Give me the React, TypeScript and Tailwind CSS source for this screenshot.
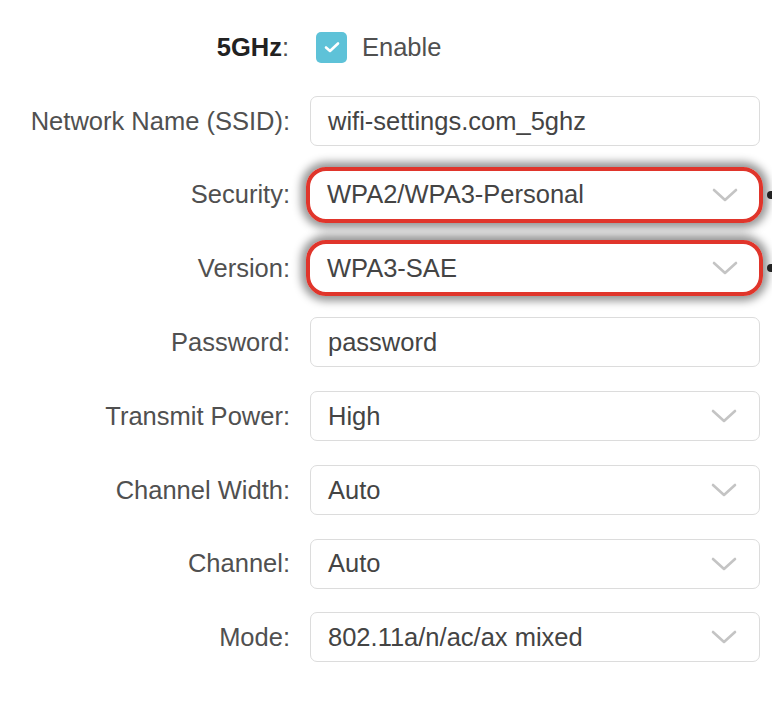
import React from "react";

const Chevron = () => (
  <svg width="28" height="16" viewBox="0 0 28 16" className="shrink-0">
    <polyline points="3,3 14,13 25,3" fill="none" stroke="#c4c4c4" strokeWidth="2.6" strokeLinecap="round" strokeLinejoin="round" />
  </svg>
);

type Row = { label: string; value: string; select?: boolean; mark?: boolean };

const rows: Row[] = [
  { label: "Network Name (SSID):", value: "wifi-settings.com_5ghz" },
  { label: "Security:", value: "WPA2/WPA3-Personal", select: true, mark: true },
  { label: "Version:", value: "WPA3-SAE", select: true, mark: true },
  { label: "Password:", value: "password" },
  { label: "Transmit Power:", value: "High", select: true },
  { label: "Channel Width:", value: "Auto", select: true },
  { label: "Channel:", value: "Auto", select: true },
  { label: "Mode:", value: "802.11a/n/ac/ax mixed", select: true },
];

export default function App() {
  return (
    <div
      className="w-[772px] h-[704px] bg-white overflow-hidden pt-[22px] flex flex-col gap-[23.8px] text-[25.5px] text-[#505050]"
      style={{ fontFamily: '"Liberation Sans", Arial, sans-serif' }}
    >
      <div className="flex items-center h-[50px]">
        <div className="w-[290px] text-right font-bold text-[#222] pr-[1px]">
          5GHz<span className="font-normal text-[#505050]">:</span>
        </div>
        <div className="ml-[26px] flex items-center gap-[15px]">
          <div className="w-[31px] h-[31px] rounded-[5px] bg-[#5ec2d8] flex items-center justify-center">
            <svg width="16" height="12" viewBox="0 0 16 12">
              <polyline points="2,6.5 6,10 14,2.5" fill="none" stroke="#fff" strokeWidth="2.6" strokeLinecap="round" strokeLinejoin="round" />
            </svg>
          </div>
          <span>Enable</span>
        </div>
      </div>
      {rows.map((r) => (
        <div key={r.label} className="flex items-center h-[50px]">
          <div className="w-[290px] text-right whitespace-nowrap">{r.label}</div>
          <div className="relative ml-[20px] w-[450px] h-[50px]">
            {r.mark && (
              <div className="absolute -left-[4px] -right-[3px] -top-[3px] -bottom-[3px] rounded-[20px] shadow-[0_0_9px_5px_rgba(0,0,0,0.42)]" />
            )}
            <div
              className={`relative h-full w-full bg-white flex items-center justify-between pl-[17px] pr-[21px] text-[#444] ${
                r.mark ? "rounded-[16px]" : "border border-[#dcdcdc] rounded-[7px]"
              }`}
            >
              <span className="whitespace-nowrap">{r.value}</span>
              {r.select && <Chevron />}
            </div>
            {r.mark && (
              <>
                <div className="absolute -left-[4px] -right-[3px] -top-[3px] -bottom-[3px] rounded-[20px] border-[4px] border-[#e0352b]" />
                <div className="absolute -right-[15px] top-1/2 -translate-y-1/2 w-[8px] h-[8px] rounded-full bg-[#222]" />
              </>
            )}
          </div>
        </div>
      ))}
    </div>
  );
}
